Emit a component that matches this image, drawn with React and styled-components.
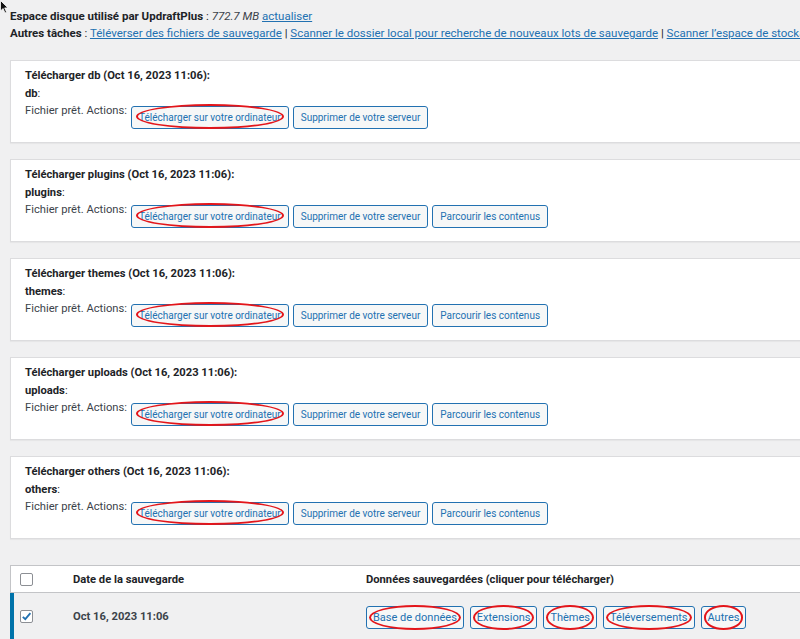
import React from 'react';
import styled, { createGlobalStyle } from 'styled-components';

const GlobalStyle = createGlobalStyle`
  html, body {
    margin: 0;
    padding: 0;
    background: #f0f0f1;
    overflow: hidden;
  }
  body {
    font-family: Roboto, "Liberation Sans", Arial, sans-serif;
    font-size: 11.2px;
    color: #3c434a;
  }
`;

const Page = styled.div`
  position: relative;
  width: 830px;
  padding: 8px 0 0 10px;
`;

const Cursor = styled.svg`
  position: absolute;
  left: 0;
  top: 0;
`;

const InfoLine = styled.div`
  font-size: 11.5px;
  line-height: 17px;
  white-space: nowrap;
  color: #1d2327;
`;

const Label = styled.b`
  font-weight: 700;
  color: #1d2327;
`;

const Size = styled.i`
  color: #3c434a;
`;

const TextLink = styled.a`
  color: #2271b1;
  text-decoration: underline;
  cursor: pointer;
`;

const Card = styled.div`
  background: #fff;
  border: 1px solid #dcdcde;
  box-shadow: 0 1px 1px rgba(0, 0, 0, 0.04);
  padding: 6px 14px 13px;
  margin-top: ${(p) => (p.$first ? '18px' : '16px')};
`;

const CardTitle = styled.div`
  font-weight: 700;
  color: #1d2327;
  line-height: 17px;
`;

const EntityName = styled.div`
  margin-top: 1px;
  line-height: 17px;
  color: #1d2327;
  b {
    font-weight: 700;
  }
`;

const ActionsRow = styled.div`
  display: flex;
  align-items: flex-start;
  gap: 4px;
`;

const ActionsLabel = styled.span`
  line-height: 17px;
`;

const Button = styled.button`
  position: relative;
  margin-top: 4px;
  height: 23px;
  padding: 0 7px;
  font-family: inherit;
  font-size: 10px;
  color: #2271b1;
  background: #f6f7f7;
  border: 1px solid #2271b1;
  border-radius: 3px;
  white-space: nowrap;
  cursor: pointer;
`;

const Circle = styled.span`
  position: absolute;
  top: ${(p) => p.$top || '-3px'};
  bottom: ${(p) => p.$bottom || '-1px'};
  left: ${(p) => p.$side || '4px'};
  right: ${(p) => p.$side || '4px'};
  border: 2px solid #e3151a;
  border-radius: 50%;
  pointer-events: none;
`;

const Table = styled.div`
  margin-top: 26px;
  border: 1px solid #c3c4c7;
  border-bottom: none;
  background: #fff;
`;

const HeadRow = styled.div`
  display: grid;
  grid-template-columns: 62px 293px 1fr;
  align-items: center;
  height: 26px;
  background: #fff;
  border-bottom: 1px solid #c3c4c7;
  font-weight: 700;
  color: #1d2327;
`;

const Row = styled.div`
  display: grid;
  grid-template-columns: 59px 293px 1fr;
  align-items: center;
  height: 46px;
  background: #f0f0f1;
  border-left: 4px solid #0073aa;
  margin-left: -1px;
`;

const CheckCell = styled.div`
  display: flex;
  padding-left: ${(p) => p.$pad || '9px'};
`;

const Box = styled.span`
  display: inline-flex;
  align-items: center;
  justify-content: center;
  width: 13px;
  height: 13px;
  background: #fff;
  border: 1px solid #8c8f94;
  border-radius: 2px;
  box-sizing: border-box;
`;

const DateCell = styled.div`
  font-weight: 700;
  color: #3c434a;
`;

const DataButtons = styled.div`
  display: flex;
  gap: 6px;
  padding-top: 2px;
`;

const DataButton = styled(Button)`
  margin-top: 0;
  padding: 0 6px;
  font-size: 11px;
`;

const entities = ['db', 'plugins', 'themes', 'uploads', 'others'];

const DownloadCard = ({ name, first }) => (
  <Card $first={first}>
    <CardTitle>Télécharger {name} (Oct 16, 2023 11:06):</CardTitle>
    <EntityName>
      <b>{name}</b>:
    </EntityName>
    <ActionsRow>
      <ActionsLabel>Fichier prêt. Actions:</ActionsLabel>
      <Button>
        Télécharger sur votre ordinateur
        <Circle />
      </Button>
      <Button>Supprimer de votre serveur</Button>
      {name !== 'db' && <Button>Parcourir les contenus</Button>}
    </ActionsRow>
  </Card>
);

const dataParts = ['Base de données', 'Extensions', 'Thèmes', 'Téléversements', 'Autres'];

const App = () => (
  <>
    <GlobalStyle />
    <Page>
      <Cursor width="10" height="14" viewBox="0 0 10 14">
        <path d="M0.5 0.5 L0.5 11 L3 8.5 L5 13 L6.6 12.3 L4.7 7.9 L8 7.9 Z" fill="#111" stroke="#fff" strokeWidth="0.8" />
      </Cursor>
      <InfoLine>
        <Label>Espace disque utilisé par UpdraftPlus</Label> : <Size>772.7 MB</Size>{' '}
        <TextLink>actualiser</TextLink>
      </InfoLine>
      <InfoLine>
        <Label>Autres tâches</Label> : <TextLink>Téléverser des fichiers de sauvegarde</TextLink> |{' '}
        <TextLink>Scanner le dossier local pour recherche de nouveaux lots de sauvegarde</TextLink> |{' '}
        <TextLink>Scanner l’espace de stockage distant</TextLink>
      </InfoLine>

      {entities.map((e, i) => (
        <DownloadCard key={e} name={e} first={i === 0} />
      ))}

      <Table>
        <HeadRow>
          <CheckCell>
            <Box />
          </CheckCell>
          <div>Date de la sauvegarde</div>
          <div>Données sauvegardées (cliquer pour télécharger)</div>
        </HeadRow>
        <Row>
          <CheckCell $pad="6px">
            <Box>
              <svg width="11" height="11" viewBox="0 0 11 11">
                <path d="M1.8 5.8 L4.3 8.2 L9.4 2.2" fill="none" stroke="#2271b1" strokeWidth="1.8" />
              </svg>
            </Box>
          </CheckCell>
          <DateCell>Oct 16, 2023 11:06</DateCell>
          <DataButtons>
            {dataParts.map((p) => (
              <DataButton key={p}>
                {p}
                <Circle $top="-2px" $bottom="-2px" $side="2px" />
              </DataButton>
            ))}
          </DataButtons>
        </Row>
      </Table>
    </Page>
  </>
);

export default App;
